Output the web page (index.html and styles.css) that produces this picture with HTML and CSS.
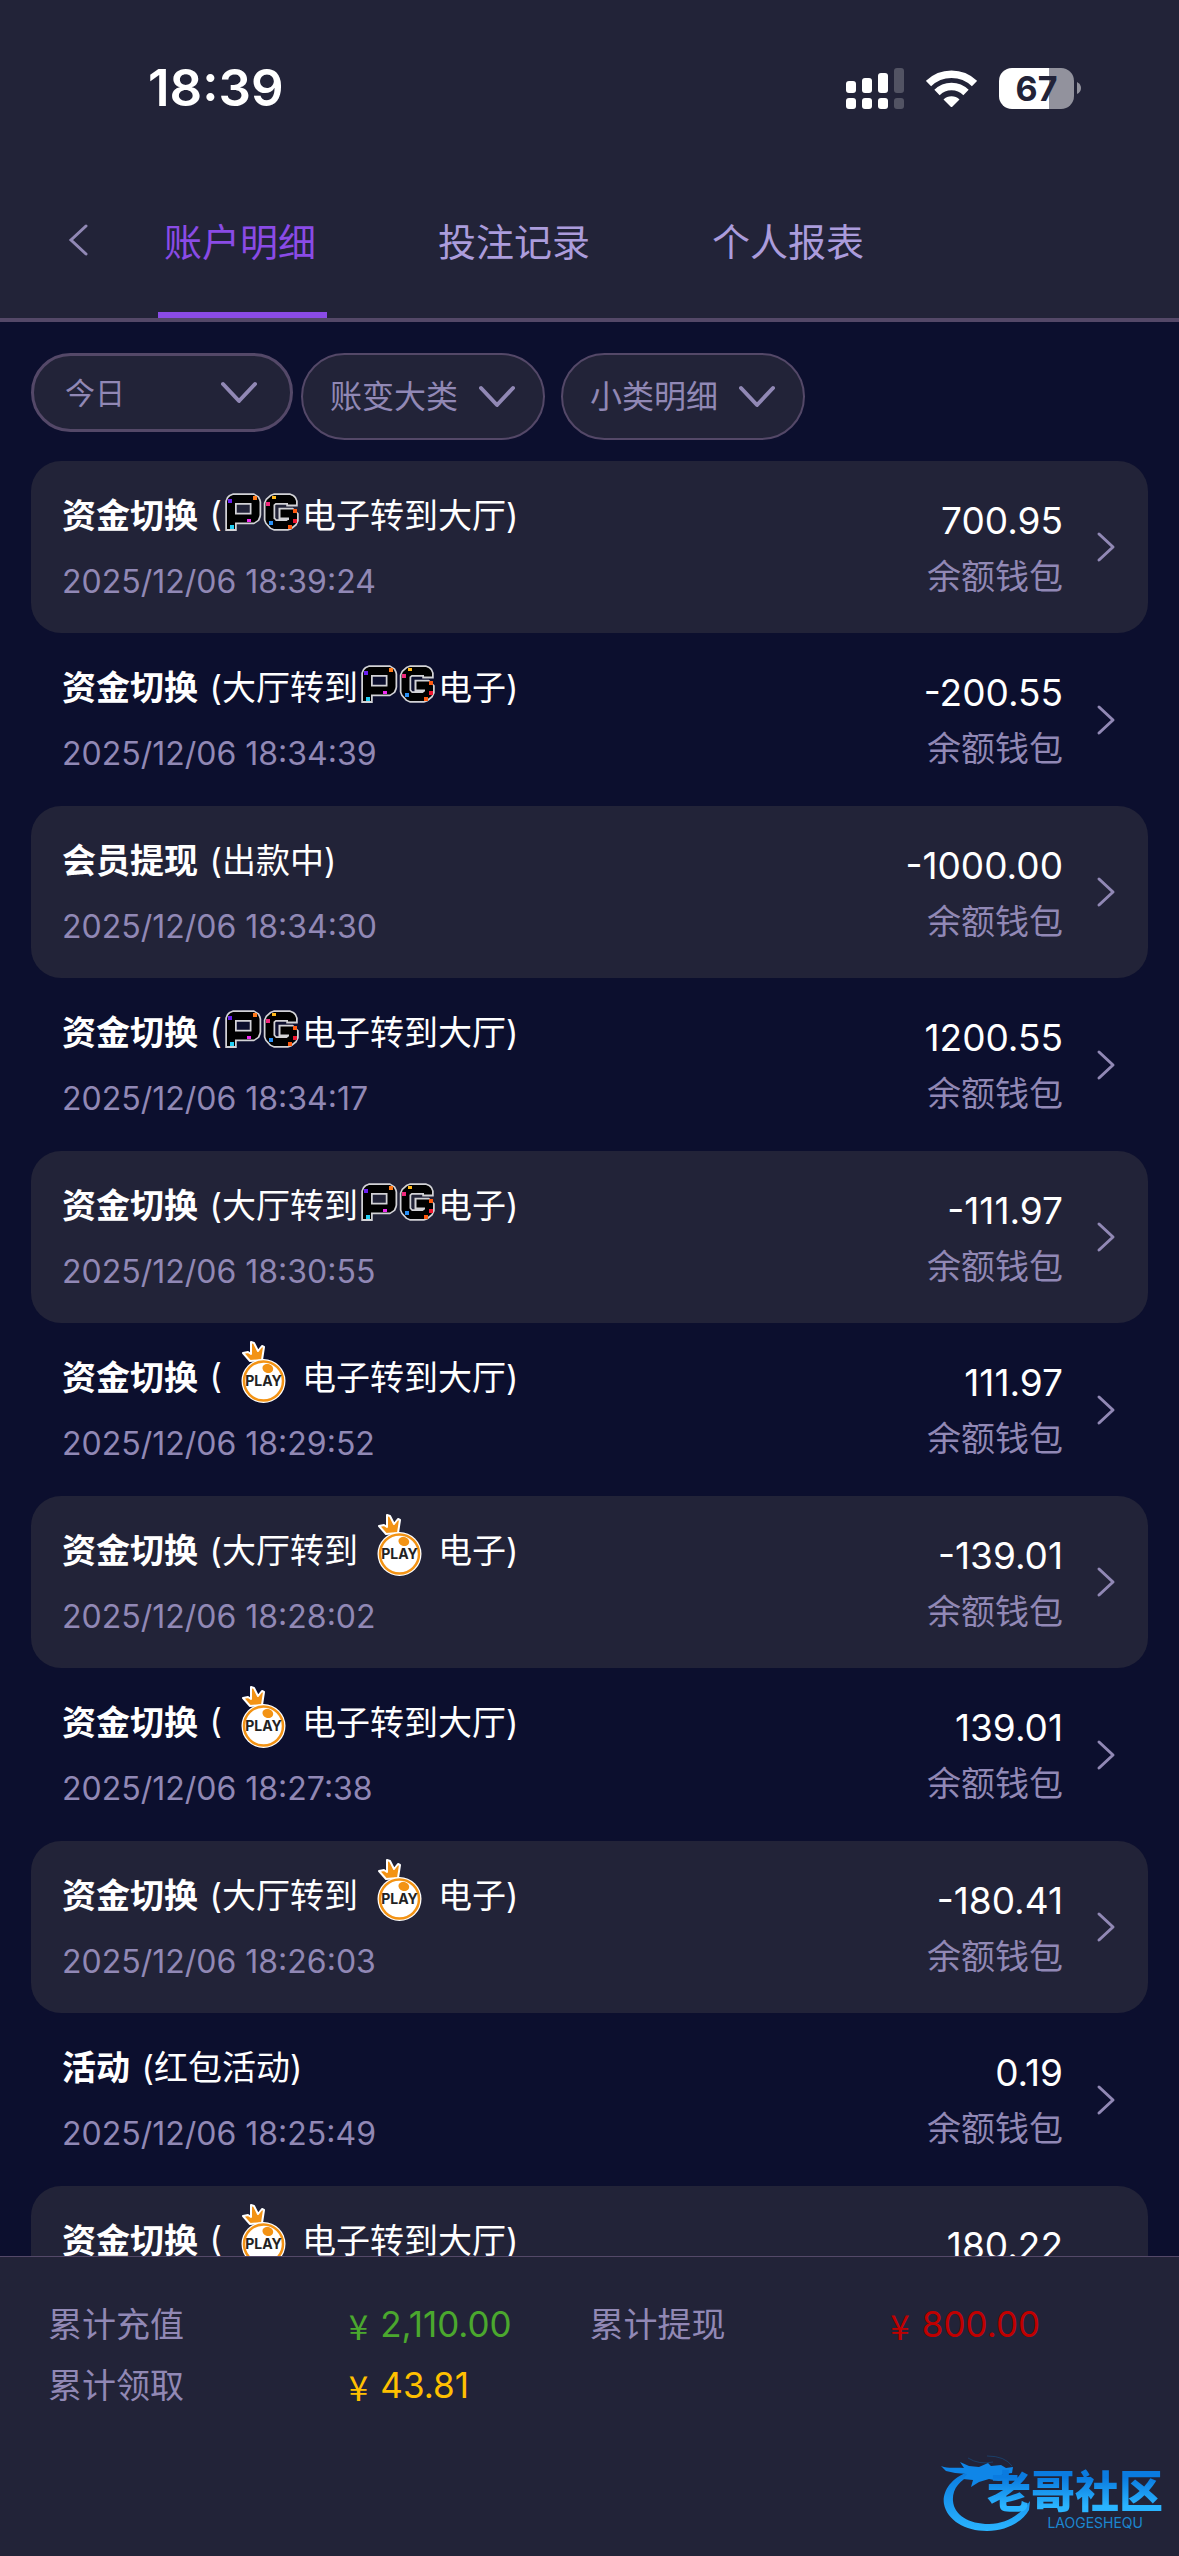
FILE: index.html
```html
<!DOCTYPE html>
<html lang="zh-CN">
<head>
<meta charset="utf-8">
<meta name="viewport" content="width=device-width, initial-scale=1">
<title>账户明细</title>
<link rel="stylesheet" href="styles.css">
</head>
<body>
<svg class="defs" aria-hidden="true">
  <symbol id="logo-pg" viewBox="0 0 80 72">
    <g transform="translate(4 17)" fill="none" stroke-linejoin="bevel">
      <g stroke="#d2d2d6" stroke-width="11.500">
        <path d="M5 37V7L7 5H28L29.500 8V21L28 24.500H5"/>
        <path d="M66 12.500V7L64 5H48L43.500 9V26L48 31H62L67 27V19.500H52.500"/>
      </g>
      <g stroke="#000" stroke-width="8">
        <path d="M5 35V7L7 5H28L29.500 8V21L28 24.500H5"/>
        <path d="M66 10.500V7L64 5H48L43.500 9V26L48 31H62L67 27V19.500H54.500"/>
      </g>
      <g stroke="none">
        <path fill="#6a1ff0" d="M2 5h4v4h-4z"/>
        <path fill="#ff7a1a" d="M27 2h4v4h-4z"/>
        <path fill="#f02af0" d="M21 25h4v3h-4z"/>
        <path fill="#22d0f5" d="M4 31h4v4h-4z"/>
        <path fill="#ffb81a" d="M46 2h4v3h-4z"/>
        <path fill="#f0287c" d="M40 8h4v4h-4z"/>
        <path fill="#ff5a10" d="M67 15h4v4h-4z"/>
        <path fill="#f01830" d="M67 25h4v4h-4z"/>
        <path fill="#2a90f5" d="M43 27h4v4h-4z"/>
        <path fill="#ff5a10" d="M62 31h4v4h-4z"/>
      </g>
    </g>
  </symbol>
  <symbol id="logo-play" viewBox="0 0 80 72">
    <g transform="translate(2 2)">
      <path d="M26 20L19 12L24 11L27 13L27 1L30 2L34 10L38 5L40 6L38 19Z" fill="#f39314" stroke="#fff" stroke-width="2" stroke-linejoin="round"/>
      <circle cx="39.500" cy="40" r="22" fill="#fff"/>
      <circle cx="39.500" cy="40" r="19.500" fill="#fff" stroke="#f39314" stroke-width="2.500"/>
      <ellipse cx="44" cy="27.500" rx="5.500" ry="4.500" transform="rotate(20 44 27)" fill="#f39314"/>
      <text x="39.500" y="45" text-anchor="middle" class="play-word">PLAY</text>
    </g>
  </symbol>
  <symbol id="icon-right" viewBox="0 0 20 32">
    <path d="M3 3L17 16L3 29" fill="none" stroke="currentColor" stroke-width="3" stroke-linecap="round" stroke-linejoin="round"/>
  </symbol>
  <symbol id="icon-down" viewBox="0 0 36 24">
    <path d="M2 3L18 20L34 3" fill="none" stroke="currentColor" stroke-width="4" stroke-linecap="round" stroke-linejoin="round"/>
  </symbol>
</svg>

<div class="app">
  <header class="header">
    <div class="status">
      <span class="clock">18:39</span>
      <div class="indicators">
        <svg width="58" height="41" viewBox="0 0 58 41" fill="#fff" role="img" aria-label="信号">
          <rect x="0" y="13" width="10" height="12" rx="3"/><rect x="16" y="10" width="10" height="15" rx="3"/><rect x="32" y="5" width="10" height="20" rx="3"/><rect x="48" y="0" width="10" height="25" rx="3" opacity=".22"/>
          <rect x="0" y="30" width="10" height="11" rx="3"/><rect x="16" y="30" width="10" height="11" rx="3"/><rect x="32" y="30" width="10" height="11" rx="3"/><rect x="48" y="30" width="10" height="11" rx="3" opacity=".22"/>
        </svg>
        <svg width="51" height="41" viewBox="0 0 51 41" role="img" aria-label="Wi-Fi">
          <g fill="none" stroke="#fff" stroke-width="7.500"><path d="M2.500 15.500A33 33 0 0 1 48.500 15.500"/><path d="M11 24.500A20.500 20.500 0 0 1 40 24.500"/></g>
          <path d="M17.500 31.500A11.500 11.500 0 0 1 33.500 31.500L26.500 38.500Q25.500 39.500 24.500 38.500Z" fill="#fff"/>
        </svg>
        <div class="battery">
          <span class="battery-body">67</span>
          <svg width="4" height="12" viewBox="0 0 4 12"><path d="M0 0Q4 2 4 6Q4 10 0 12Z" fill="#92929d"/></svg>
        </div>
      </div>
    </div>
    <nav class="nav">
      <button class="back" type="button" aria-label="返回">
        <svg width="20" height="32" viewBox="0 0 20 32"><path d="M18 2L3 16L18 30" fill="none" stroke="currentColor" stroke-width="3" stroke-linecap="round"/></svg>
      </button>
      <div class="tabs">
        <a class="tab active" href="#detail">账户明细</a>
        <a class="tab" href="#bets">投注记录</a>
        <a class="tab" href="#report">个人报表</a>
      </div>
    </nav>
  </header>

  <form class="filters">
    <label class="pill date"><select aria-label="日期"><option>今日</option></select><svg class="down"><use href="#icon-down"/></svg></label>
    <label class="pill"><select aria-label="账变大类"><option>账变大类</option></select><svg class="down"><use href="#icon-down"/></svg></label>
    <label class="pill last"><select aria-label="小类明细"><option>小类明细</option></select><svg class="down"><use href="#icon-down"/></svg></label>
  </form>

  <ul class="list">
    <li><a class="row" href="#r1"><div class="info"><div class="title"><strong>资金切换</strong> (<svg class="logo"><use href="#logo-pg"/></svg>电子转到大厅)</div><time>2025/12/06 18:39:24</time></div><div class="sum"><span class="amount">700.95</span><span class="wallet">余额钱包</span></div><svg class="right"><use href="#icon-right"/></svg></a></li>
    <li><a class="row" href="#r2"><div class="info"><div class="title"><strong>资金切换</strong> (大厅转到<svg class="logo"><use href="#logo-pg"/></svg>电子)</div><time>2025/12/06 18:34:39</time></div><div class="sum"><span class="amount">-200.55</span><span class="wallet">余额钱包</span></div><svg class="right"><use href="#icon-right"/></svg></a></li>
    <li><a class="row" href="#r3"><div class="info"><div class="title"><strong>会员提现</strong> (出款中)</div><time>2025/12/06 18:34:30</time></div><div class="sum"><span class="amount">-1000.00</span><span class="wallet">余额钱包</span></div><svg class="right"><use href="#icon-right"/></svg></a></li>
    <li><a class="row" href="#r4"><div class="info"><div class="title"><strong>资金切换</strong> (<svg class="logo"><use href="#logo-pg"/></svg>电子转到大厅)</div><time>2025/12/06 18:34:17</time></div><div class="sum"><span class="amount">1200.55</span><span class="wallet">余额钱包</span></div><svg class="right"><use href="#icon-right"/></svg></a></li>
    <li><a class="row" href="#r5"><div class="info"><div class="title"><strong>资金切换</strong> (大厅转到<svg class="logo"><use href="#logo-pg"/></svg>电子)</div><time>2025/12/06 18:30:55</time></div><div class="sum"><span class="amount">-111.97</span><span class="wallet">余额钱包</span></div><svg class="right"><use href="#icon-right"/></svg></a></li>
    <li><a class="row" href="#r6"><div class="info"><div class="title"><strong>资金切换</strong> (<svg class="logo"><use href="#logo-play"/></svg>电子转到大厅)</div><time>2025/12/06 18:29:52</time></div><div class="sum"><span class="amount">111.97</span><span class="wallet">余额钱包</span></div><svg class="right"><use href="#icon-right"/></svg></a></li>
    <li><a class="row" href="#r7"><div class="info"><div class="title"><strong>资金切换</strong> (大厅转到<svg class="logo"><use href="#logo-play"/></svg>电子)</div><time>2025/12/06 18:28:02</time></div><div class="sum"><span class="amount">-139.01</span><span class="wallet">余额钱包</span></div><svg class="right"><use href="#icon-right"/></svg></a></li>
    <li><a class="row" href="#r8"><div class="info"><div class="title"><strong>资金切换</strong> (<svg class="logo"><use href="#logo-play"/></svg>电子转到大厅)</div><time>2025/12/06 18:27:38</time></div><div class="sum"><span class="amount">139.01</span><span class="wallet">余额钱包</span></div><svg class="right"><use href="#icon-right"/></svg></a></li>
    <li><a class="row" href="#r9"><div class="info"><div class="title"><strong>资金切换</strong> (大厅转到<svg class="logo"><use href="#logo-play"/></svg>电子)</div><time>2025/12/06 18:26:03</time></div><div class="sum"><span class="amount">-180.41</span><span class="wallet">余额钱包</span></div><svg class="right"><use href="#icon-right"/></svg></a></li>
    <li><a class="row" href="#r10"><div class="info"><div class="title"><strong>活动</strong> (红包活动)</div><time>2025/12/06 18:25:49</time></div><div class="sum"><span class="amount">0.19</span><span class="wallet">余额钱包</span></div><svg class="right"><use href="#icon-right"/></svg></a></li>
    <li><a class="row" href="#r11"><div class="info"><div class="title"><strong>资金切换</strong> (<svg class="logo"><use href="#logo-play"/></svg>电子转到大厅)</div></div><div class="sum"><span class="amount">180.22</span></div></a></li>
  </ul>

  <footer class="footer">
    <dl class="totals">
      <dt>累计充值</dt><dd class="green"><span class="yen">¥</span><span>2,110.00</span></dd>
      <dt>累计提现</dt><dd class="red"><span class="yen">¥</span><span>800.00</span></dd>
      <dt>累计领取</dt><dd class="gold"><span class="yen">¥</span><span>43.81</span></dd>
    </dl>
    <div class="mark">
      <svg class="dragon" viewBox="0 0 92 80" aria-hidden="true">
        <defs><linearGradient id="sea" x1="0" y1="0" x2="0" y2="1"><stop offset="0" stop-color="#0a7be0"/><stop offset="1" stop-color="#2ab4ff"/></linearGradient></defs>
        <path fill="url(#sea)" d="M28 18C8 24 1 40 3 50C6 66 24 77 46 77C66 77 82 67 88 56L89 47C80 60 66 70 48 70C28 70 13 61 12 47C11 36 18 26 31 21Z"/>
        <path fill="#0f86e8" d="M0 12C8 15 14 13 23 14L19 8L28 12L38 13L47 9L50 12L60 11L65 14L72 13L71 19L63 20L56 23L69 22L68 25L58 27L48 25L38 28L30 33L32 26L22 25L26 20L14 19L5 17Z"/>
        <path fill="none" stroke="#135a97" stroke-width="1" opacity=".5" d="M27 4Q38 11 52 8M46 2Q64 2 71 12"/>
      </svg>
      <div class="mark-text"><span class="mark-name">老哥社区</span><span class="mark-latin">LAOGESHEQU</span></div>
    </div>
  </footer>
</div>
</body>
</html>
```

FILE: styles.css
```css
* {
  box-sizing: border-box;
}

body {
  margin: 0;
  background: #0c0f2e;
  color: #fff;
  font-family: Inter, "Noto Sans CJK SC", sans-serif;
  font-size: 34px;
}

a {
  color: inherit;
  text-decoration: none;
}

.defs {
  position: absolute;
  width: 0;
  height: 0;
}

.app {
  display: flex;
  flex-direction: column;
  height: 100vh;
}

/* Header */
.header {
  flex: none;
  background: #222338;
  border-bottom: 4px solid #544868;
}

.status {
  display: flex;
  justify-content: space-between;
  align-items: center;
  padding: 58px 98px 54px 148px;
}

.clock {
  font-size: 51px;
  line-height: 60px;
  font-weight: 600;
}

.indicators {
  display: flex;
  align-items: center;
  gap: 22px;
}

.battery {
  display: flex;
  align-items: center;
  gap: 3px;
}

.battery-body {
  width: 75px;
  border-radius: 13px;
  background: linear-gradient(90deg, #fff 67%, #92929d 67%);
  color: #222338;
  font-size: 34px;
  line-height: 41px;
  font-weight: 700;
  text-align: center;
}

.nav {
  display: flex;
  height: 146px;
}

.back {
  display: flex;
  justify-content: center;
  align-items: center;
  width: 158px;
  padding: 0 2px 10px 0;
  border: 0;
  background: none;
  color: #9188b5;
}

.tabs {
  display: flex;
  gap: 105px;
}

.tab {
  padding: 0 11px 0 6px;
  border-bottom: 6px solid transparent;
  color: #ab9cdc;
  font-size: 38px;
  line-height: 140px;
}

.tab.active {
  border-color: #8a4be6;
  color: #8a4be6;
}

/* Filters */
.filters {
  flex: none;
  display: flex;
  align-items: flex-start;
  padding: 31px 31px 21px;
}

.pill {
  display: flex;
  align-items: center;
  gap: 20px;
  height: 87px;
  padding: 0 28px 0 27px;
  border: 2px solid #544868;
  border-radius: 44px;
  background: #222338;
  color: #9188b5;
  font-size: 32px;
}

.pill.date {
  width: 262px;
  height: 79px;
  margin-right: 8px;
  padding: 0 33px 0 31px;
  border-width: 3px;
  font-size: 30px;
}

.pill.last {
  margin-left: 16px;
}

.pill select {
  flex: 1;
  appearance: none;
  padding: 0;
  border: 0;
  outline: 0;
  background: none;
  color: inherit;
  font: inherit;
}

.down {
  flex: none;
  width: 36px;
  height: 24px;
}

/* Records */
.list {
  flex: 1;
  min-height: 0;
  margin: 0;
  padding: 0 31px;
  overflow: hidden;
  list-style: none;
}

.row {
  display: flex;
  align-items: center;
  height: 173px;
  padding: 0 32px 0 31px;
}

li:nth-child(odd) .row {
  height: 172px;
  border-radius: 30px;
  background: #222338;
}

.info {
  flex: 1;
  align-self: flex-start;
  padding-top: 16px;
}

.title {
  display: flex;
  align-items: center;
  height: 72px;
  white-space: pre;
}

.title strong {
  margin-right: 2px;
}

.logo {
  width: 80px;
  height: 72px;
}

.play-word {
  font: 700 14px Inter, sans-serif;
  fill: #222;
}

time {
  display: block;
  margin-top: 15px;
  color: #9188b5;
  font-size: 32px;
  line-height: 36px;
}

.sum {
  display: flex;
  flex-direction: column;
  align-self: flex-start;
  align-items: flex-end;
  padding-top: 32px;
}

.amount {
  font-size: 37px;
  line-height: 56px;
}

.wallet {
  color: #9188b5;
  line-height: 56px;
}

.right {
  width: 20px;
  height: 32px;
  margin-left: 33px;
  color: #9188b5;
}

li:last-child .sum {
  padding-right: 53px;
}

/* Totals */
.footer {
  position: relative;
  flex: none;
  padding: 37px 48px 140px;
  border-top: 1px solid #544868;
  background: #222338;
}

.totals {
  display: grid;
  grid-template-columns: 5fr 4fr 5fr 4fr;
  margin: 0;
  line-height: 61px;
}

.totals dt {
  color: #9188b5;
}

.totals dd {
  display: flex;
  align-items: center;
  gap: 12px;
  margin: 0;
  font-size: 35px;
}

.yen {
  font-family: "Noto Sans CJK SC", sans-serif;
}

.green {
  color: #4ba82e;
}

.red {
  color: #c00000;
}

.gold {
  color: #ffc000;
}

/* Community mark over the page corner */
.mark {
  position: absolute;
  right: 16px;
  bottom: 22px;
  display: flex;
  align-items: flex-end;
}

.dragon {
  width: 92px;
  height: 80px;
}

.mark-text {
  display: flex;
  flex-direction: column;
  margin-left: -46px;
  padding-bottom: 4px;
}

.mark-name {
  background: linear-gradient(#0a7be0 20%, #2ab4ff 80%);
  background-clip: text;
  color: transparent;
  font-size: 44px;
  line-height: 48px;
  font-weight: 900;
}

.mark-latin {
  align-self: flex-end;
  padding-right: 20px;
  color: #1b86cf;
  font-size: 14px;
  line-height: 14px;
}
```
